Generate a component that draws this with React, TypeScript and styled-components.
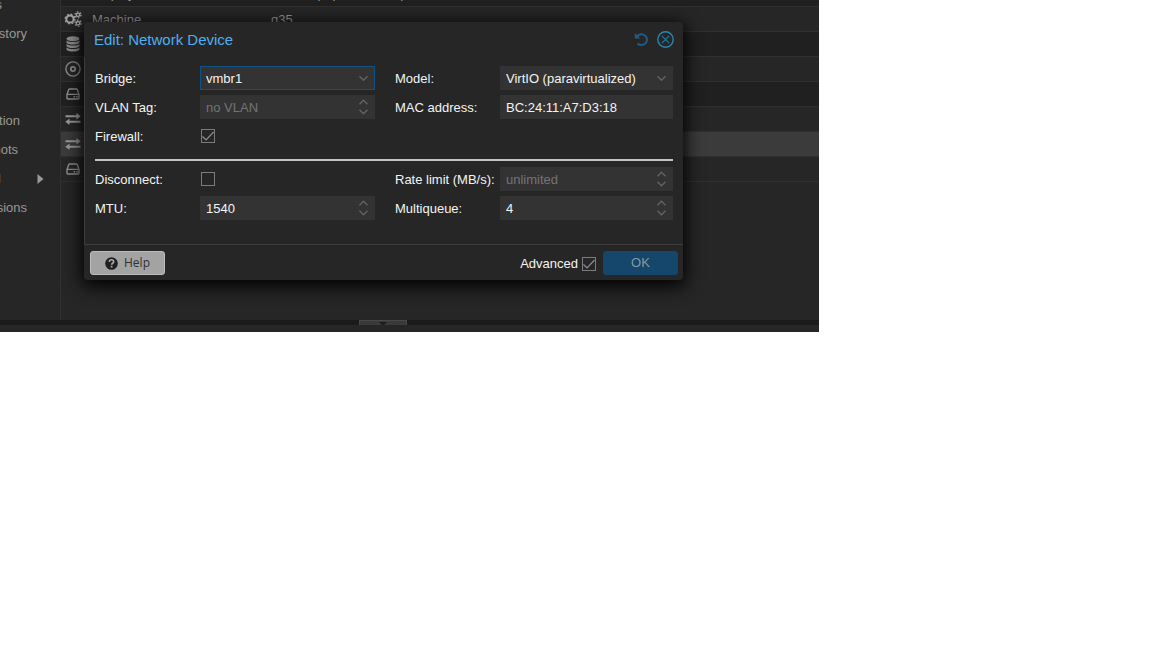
import React from "react";
import styled, { createGlobalStyle, css } from "styled-components";

const GlobalStyle = createGlobalStyle`
  *, *::before, *::after { box-sizing: border-box; }
  body {
    margin: 0;
    background: #fff;
    font-family: "Liberation Sans", Arial, sans-serif;
    font-size: 13px;
    line-height: 16px;
  }
  button, input, select { font: inherit; }
`;

const Page = styled.div`
  padding-right: 333px;
`;

const Workspace = styled.div`
  position: relative;
  background: #262626;
  color: #8f8f8f;
`;

const Columns = styled.div`
  display: flex;
  min-height: 320px;
`;

const SideNav = styled.nav`
  flex: none;
  width: 61px;
  height: 320px;
  overflow: hidden;
  border-right: 1px solid #303030;
  display: flex;
  flex-direction: column;
  justify-content: flex-start;
`;

const NavLink = styled.a<{ $tail: number }>`
  flex: none;
  display: flex;
  align-items: center;
  justify-content: flex-end;
  height: 29px;
  width: ${(p) => p.$tail}px;
  color: #989898;
  white-space: nowrap;
  text-decoration: none;

  &:first-child { margin-top: -10px; }
  svg { flex: none; margin-left: 36px; }
`;

const TableArea = styled.div`
  flex: 1;
  min-width: 0;
  overflow: hidden;
  height: 320px;
`;

const HardwareTable = styled.table`
  border-collapse: collapse;
  table-layout: fixed;
  width: 100%;
  margin-top: -19px;
`;

const HardwareRow = styled.tr<{ $selected?: boolean }>`
  height: 25px;
  background: ${(p) => (p.$selected ? "#3b3b3b" : "#262626")};
  &:nth-child(odd) { background: ${(p) => (p.$selected ? "#3b3b3b" : "#202020")}; }
`;

const Cell = styled.td<{ $width?: number }>`
  width: ${(p) => (p.$width ? `${p.$width}px` : "auto")};
  padding: 0;
  border-bottom: 1px solid #303030;
  color: #989898;
  white-space: nowrap;
  svg { display: block; margin: 0 auto; }
`;

const NameCell = styled(Cell)`
  padding: 2px 0 0 8px;
`;

const ValueCell = styled(Cell)`
  padding-top: 2px;
`;

const Splitter = styled.div`
  display: flex;
  height: 5px;
  padding-left: 359px;
  background: #1a1a1a;
`;

const CollapseButton = styled.button`
  display: flex;
  justify-content: center;
  width: 48px;
  height: 5px;
  padding: 0;
  border: 1px solid #484848;
  border-bottom: 0;
  background: #3a3a3a;
`;

const LogPanel = styled.div`
  height: 7px;
  background: #262626;
`;

const Dialog = styled.form`
  position: absolute;
  top: 22px;
  left: 84px;
  width: 599px;
  border-radius: 4px;
  background: #262626;
  color: #f4f4f4;
  box-shadow: 0 4px 18px 2px #000;
`;

const DialogHeader = styled.header`
  display: flex;
  align-items: center;
  gap: 7px;
  height: 35px;
  padding: 0 9px 0 10px;
`;

const Title = styled.h1`
  flex: 1;
  margin: 0;
  color: #4caff0;
  font-size: 15px;
  line-height: 20px;
  font-weight: 400;
`;

const ToolButton = styled.button`
  display: flex;
  width: 17px;
  height: 17px;
  padding: 0;
  border: 0;
  background: none;
`;

const DialogBody = styled.div`
  padding: 9px 10px 24px;
  border-left: 1px solid #3d3d3d;
  border-bottom: 1px solid #3d3d3d;
`;

const FieldGrid = styled.div`
  display: grid;
  grid-template-columns: 280px minmax(0, 1fr);
  column-gap: 20px;
  row-gap: 5px;
`;

const Divider = styled.hr`
  height: 2px;
  margin: 11px 0 6px;
  border: 0;
  background: #c4c4c4;
`;

const FieldRow = styled.div`
  display: flex;
  align-items: center;
  height: 24px;
`;

const FieldLabel = styled.label`
  flex: none;
  width: 105px;
  padding-top: 2px;
  white-space: nowrap;
`;

const Control = styled.div<{ $focused?: boolean }>`
  display: flex;
  align-items: center;
  flex: 1;
  min-width: 0;
  height: 24px;
  padding-right: 5px;
  border: 1px solid ${(p) => (p.$focused ? "#0f5283" : "#333")};
  background: #333;
  svg { flex: none; }
`;

const inputText = css`
  flex: 1;
  min-width: 0;
  height: 22px;
  padding: 0 0 0 5px;
  border: 0;
  outline: 0;
  background: transparent;
  color: #f4f4f4;
`;

const TextInput = styled.input`
  ${inputText}
  &::placeholder { color: #747474; opacity: 1; }
`;

const SelectInput = styled.select`
  ${inputText}
  padding-top: 2px;
  appearance: none;
`;

const TickBox = styled.input`
  appearance: none;
  flex: none;
  width: 14px;
  height: 14px;
  margin: 0 0 0 1px;
  border: 1px solid #7c7c7c;
  background: transparent;
  display: grid;
  place-items: center;

  &:checked::before {
    content: "";
    width: 12px;
    height: 12px;
    background: #8c8c8c;
    clip-path: polygon(8% 50%, 0 58%, 34% 90%, 100% 20%, 93% 12%, 34% 74%);
  }
`;

const DialogFooter = styled.footer`
  display: flex;
  align-items: center;
  height: 35px;
  padding: 1px 5px 0 6px;
`;

const Advanced = styled.label`
  display: flex;
  align-items: center;
  gap: 3px;
  margin: 2px 7px 0 auto;
`;

const ActionButton = styled.button<{ $primary?: boolean }>`
  display: flex;
  align-items: center;
  justify-content: center;
  gap: 6px;
  width: 75px;
  height: 24px;
  padding: 0;
  border: 1px solid ${(p) => (p.$primary ? "#15466b" : "#bcbcbc")};
  border-radius: 3px;
  background: ${(p) => (p.$primary ? "#15466b" : "#a3a3a3")};
  color: ${(p) => (p.$primary ? "#8c979f" : "#303030")};
  font-family: ${(p) => (p.$primary ? '"Liberation Sans", Arial, sans-serif' : '"Open Sans", sans-serif')};
  font-size: ${(p) => (p.$primary ? 13 : 12)}px;
`;

const Gear = ({ cx, cy, r, teeth, width }: { cx: number; cy: number; r: number; teeth: number; width: number }) => {
  const step = (2 * Math.PI * (r + 1)) / (teeth * 2);
  return (
    <g fill="none" stroke="#a2a2a2">
      <circle cx={cx} cy={cy} r={r - 0.3} strokeWidth={width} />
      <circle cx={cx} cy={cy} r={r + 1} strokeWidth="1.3" strokeDasharray={`${step} ${step}`} />
    </g>
  );
};

const CogsIcon = () => (
  <svg width="18" height="16" viewBox="0 0 18 16">
    <Gear cx={6} cy={8} r={3.9} teeth={8} width={2} />
    <Gear cx={14} cy={3.8} r={2} teeth={6} width={1.4} />
    <Gear cx={14} cy={12.2} r={2} teeth={6} width={1.4} />
  </svg>
);

const DatabaseIcon = () => (
  <svg width="14" height="16" viewBox="0 0 14 16" fill="#8d8d8d">
    <ellipse cx="7" cy="2.8" rx="6.5" ry="2.5" />
    <path d="M.5 4.6c2.8 2 10.2 2 13 0v1.9c-1 2.8-12 2.8-13 0zM.5 8.1c2.8 2 10.2 2 13 0V10c-1 2.8-12 2.8-13 0zM.5 11.6c2.8 2 10.2 2 13 0v1.9c-1 2.8-12 2.8-13 0z" />
  </svg>
);

const DiscIcon = () => (
  <svg width="16" height="16" viewBox="0 0 16 16" fill="none" stroke="#8d8d8d">
    <circle cx="8" cy="8" r="7.1" strokeWidth="1.4" />
    <circle cx="8" cy="8" r="2.2" strokeWidth="1.7" />
  </svg>
);

const DriveIcon = () => (
  <svg width="14" height="12" viewBox="0 0 14 12" fill="none" stroke="#8d8d8d" strokeWidth="1.4">
    <path d="M1 6.6 2.7 1.6Q3 1 3.6 1h6.8q.6 0 .9.6L13 6.6v3.7q0 .7-.7.7H1.7q-.7 0-.7-.7zM1 6.4h12" />
    <path d="M7.6 8.8h1.5M10.2 8.8h1.5" />
  </svg>
);

const ExchangeIcon = () => (
  <svg width="16" height="12" viewBox="0 0 16 12" fill="#999">
    <path d="M.5 2.2H11.5V0L15.7 3.2l-4.2 3.2V4.2H.5zM15.5 7.8H4.5V5.6L.3 8.8l4.2 3.2V9.8h11z" />
  </svg>
);

const Chevron = () => (
  <svg width="11" height="7" viewBox="0 0 11 7" fill="none" stroke="#636363" strokeWidth="1.4">
    <path d="M1.5 1.2 5.5 5.2l4-4" />
  </svg>
);

const SpinArrows = () => (
  <svg width="11" height="18" viewBox="0 0 11 18" fill="none" stroke="#636363" strokeWidth="1.4">
    <path d="M1.5 6.2 5.5 2.2l4 4M1.5 11.8l4 4 4-4" />
  </svg>
);

const ResetIcon = () => (
  <svg width="17" height="17" viewBox="0 0 17 17">
    <path d="M4.2 5.4A5.4 5.4 0 1 1 4.6 12.4" fill="none" stroke="#205b86" strokeWidth="2.1" />
    <path d="M1.8 2v5.6h5.6z" fill="#205b86" />
  </svg>
);

const CloseIcon = () => (
  <svg width="17" height="17" viewBox="0 0 17 17" fill="none">
    <circle cx="8.5" cy="8.5" r="7.7" stroke="#2b86ad" strokeWidth="1.4" />
    <path d="m4.9 4.9 7.2 7.2M12.1 4.9l-7.2 7.2" stroke="#25749b" strokeWidth="1.3" />
  </svg>
);

const HelpIcon = () => (
  <svg width="13" height="13" viewBox="0 0 13 13">
    <circle cx="6.5" cy="6.5" r="6.3" fill="#202020" />
    <path d="M4.3 4.9c.1-3 4.6-2.7 4.4-.1-.1 1.4-2 1.4-2.1 2.9" fill="none" stroke="#a8a8a8" strokeWidth="1.7" />
    <path d="M5.7 8.8h1.8v1.7H5.7z" fill="#a8a8a8" />
  </svg>
);

const NavArrow = () => (
  <svg width="7" height="10" viewBox="0 0 7 10">
    <path d="M.5 0 6.5 5l-6 5z" fill="#989898" />
  </svg>
);

const navItems: { id: string; name?: string; tail: number; menu?: boolean }[] = [
  { id: "options", name: "Options", tail: 2 },
  { id: "history", name: "Task History", tail: 27 },
  { id: "monitor", tail: 0 },
  { id: "backup", tail: 0 },
  { id: "replication", name: "Replication", tail: 20 },
  { id: "snapshots", name: "Snapshots", tail: 18 },
  { id: "firewall", name: "Firewall", tail: 44, menu: true },
  { id: "permissions", name: "Permissions", tail: 27 },
];

const hardware: { icon?: React.ReactNode; name?: string; value?: string; selected?: boolean }[] = [
  { name: "Display", value: "Default (clipboard=vnc)" },
  { icon: <CogsIcon />, name: "Machine", value: "q35" },
  { icon: <DatabaseIcon /> },
  { icon: <DiscIcon /> },
  { icon: <DriveIcon /> },
  { icon: <ExchangeIcon /> },
  { icon: <ExchangeIcon />, selected: true },
  { icon: <DriveIcon /> },
];

const Spinner = ({ id, label, value, placeholder }: { id: string; label: string; value?: string; placeholder?: string }) => (
  <FieldRow>
    <FieldLabel htmlFor={id}>{label}</FieldLabel>
    <Control>
      <TextInput id={id} defaultValue={value} placeholder={placeholder} inputMode="numeric" />
      <SpinArrows />
    </Control>
  </FieldRow>
);

const Combo = ({ id, label, value, focused }: { id: string; label: string; value: string; focused?: boolean }) => (
  <FieldRow>
    <FieldLabel htmlFor={id}>{label}</FieldLabel>
    <Control $focused={focused}>
      <SelectInput id={id} defaultValue={value}>
        <option>{value}</option>
      </SelectInput>
      <Chevron />
    </Control>
  </FieldRow>
);

const Tick = ({ id, label, checked }: { id: string; label: string; checked?: boolean }) => (
  <FieldRow>
    <FieldLabel htmlFor={id}>{label}</FieldLabel>
    <TickBox id={id} type="checkbox" defaultChecked={checked} />
  </FieldRow>
);

export default function App() {
  return (
    <Page>
      <GlobalStyle />
      <Workspace>
        <Columns>
          <SideNav>
            {navItems.map((item) => (
              <NavLink key={item.id} href={`#${item.id}`} $tail={item.tail}>
                {item.name}
                {item.menu && <NavArrow />}
              </NavLink>
            ))}
          </SideNav>
          <TableArea>
            <HardwareTable>
              <tbody>
                {hardware.map((row, i) => (
                  <HardwareRow key={i} $selected={row.selected}>
                    <Cell $width={23}>{row.icon}</Cell>
                    <NameCell $width={187}>{row.name}</NameCell>
                    <ValueCell>{row.value}</ValueCell>
                  </HardwareRow>
                ))}
              </tbody>
            </HardwareTable>
          </TableArea>
        </Columns>
        <Splitter>
          <CollapseButton type="button" aria-label="Collapse log">
            <svg width="8" height="4" viewBox="0 0 8 4">
              <path d="M0 1h8L4 5z" fill="#1c1c1c" />
            </svg>
          </CollapseButton>
        </Splitter>
        <LogPanel />

        <Dialog onSubmit={(e) => e.preventDefault()}>
          <DialogHeader>
            <Title>Edit: Network Device</Title>
            <ToolButton type="button" aria-label="Reset"><ResetIcon /></ToolButton>
            <ToolButton type="button" aria-label="Close"><CloseIcon /></ToolButton>
          </DialogHeader>
          <DialogBody>
            <FieldGrid>
              <Combo id="bridge" label="Bridge:" value="vmbr1" focused />
              <Combo id="model" label="Model:" value="VirtIO (paravirtualized)" />
              <Spinner id="vlan" label="VLAN Tag:" placeholder="no VLAN" />
              <FieldRow>
                <FieldLabel htmlFor="mac">MAC address:</FieldLabel>
                <Control>
                  <TextInput id="mac" defaultValue="BC:24:11:A7:D3:18" />
                </Control>
              </FieldRow>
              <Tick id="firewall" label="Firewall:" checked />
            </FieldGrid>
            <Divider />
            <FieldGrid>
              <Tick id="disconnect" label="Disconnect:" />
              <Spinner id="rate" label="Rate limit (MB/s):" placeholder="unlimited" />
              <Spinner id="mtu" label="MTU:" value="1540" />
              <Spinner id="queues" label="Multiqueue:" value="4" />
            </FieldGrid>
          </DialogBody>
          <DialogFooter>
            <ActionButton type="button"><HelpIcon />Help</ActionButton>
            <Advanced>
              Advanced
              <TickBox type="checkbox" defaultChecked />
            </Advanced>
            <ActionButton type="submit" $primary>OK</ActionButton>
          </DialogFooter>
        </Dialog>
      </Workspace>
    </Page>
  );
}
